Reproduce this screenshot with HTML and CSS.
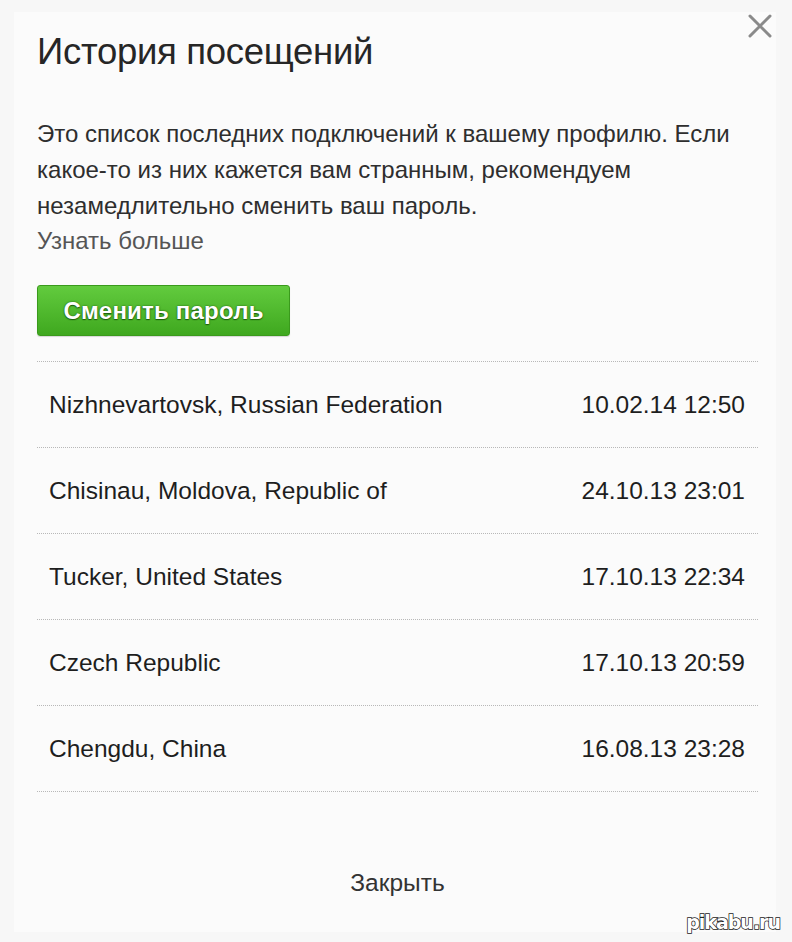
FILE: index.html
```html
<!DOCTYPE html>
<html lang="ru">
<head>
<meta charset="utf-8">
<link rel="stylesheet" href="styles.css">
</head>
<body>
<div class="dialog">
  <button class="close" aria-label="Закрыть">
    <svg width="24" height="24" viewBox="0 0 24 24"><path d="M2 2L22 22M22 2L2 22" stroke="#8a8a8a" stroke-width="3" stroke-linecap="round"/></svg>
  </button>
  <h1 class="title">История посещений</h1>
  <p class="intro">Это список последних подключений к вашему профилю. Если какое-то из них кажется вам странным, рекомендуем незамедлительно сменить ваш пароль.</p>
  <a class="more">Узнать больше</a>
  <div class="actions"><button class="btn-green">Сменить пароль</button></div>
  <ul class="visits">
    <li class="visit"><span class="place">Nizhnevartovsk, Russian Federation</span><span class="time">10.02.14 12:50</span></li>
    <li class="visit"><span class="place">Chisinau, Moldova, Republic of</span><span class="time">24.10.13 23:01</span></li>
    <li class="visit"><span class="place">Tucker, United States</span><span class="time">17.10.13 22:34</span></li>
    <li class="visit"><span class="place">Czech Republic</span><span class="time">17.10.13 20:59</span></li>
    <li class="visit"><span class="place">Chengdu, China</span><span class="time">16.08.13 23:28</span></li>
  </ul>
  <div class="footer"><a class="close-link">Закрыть</a></div>
</div>
<div class="watermark">pikabu.ru</div>
</body>
</html>
```
FILE: styles.css
```css
html, body {
  margin: 0;
  padding: 0;
}
body {
  background: #f7f7f7;
  font-family: "Liberation Sans", Arial, sans-serif;
  color: #222;
  width: 792px;
  height: 942px;
  position: relative;
  overflow: hidden;
}
.dialog {
  position: relative;
  margin: 12px 16px 0 14px;
  background: #fbfbfb;
  padding: 20px 18px 0 23px;
  height: 920px;
  box-sizing: border-box;
}
.close {
  position: absolute;
  top: 2px;
  right: 4px;
  width: 24px;
  height: 24px;
  padding: 0;
  border: 0;
  background: none;
}
.close svg { display: block; }
.title {
  margin: 0;
  font-weight: normal;
  font-size: 36.5px;
  line-height: 40px;
  color: #262626;
  letter-spacing: -0.3px;
}
.intro {
  margin: 44px 0 0;
  font-size: 24px;
  line-height: 36px;
  color: #2e2e2e;
}
.more {
  display: block;
  font-size: 24px;
  line-height: 34px;
  color: #555;
}
.actions {
  margin-top: 27px;
}
.btn-green {
  width: 253px;
  height: 51px;
  border: 1px solid #3a9a1c;
  border-radius: 3px;
  background: linear-gradient(#62cb3e, #3fa81f);
  color: #fff;
  font-family: "Liberation Sans", Arial, sans-serif;
  font-weight: bold;
  font-size: 24px;
  letter-spacing: 0.2px;
  text-shadow: 0 0 2px #1d5c0c, 0 1px 1px #1d5c0c;
  box-shadow: 0 1px 1px rgba(0,0,0,0.15);
  padding: 0;
}
.visits {
  list-style: none;
  margin: 25px 0 0;
  padding: 0;
  border-top: 1px dotted #b8b8b8;
}
.visit {
  display: flex;
  justify-content: space-between;
  align-items: center;
  height: 85px;
  padding: 0 13px 0 12px;
  border-bottom: 1px dotted #b8b8b8;
  font-size: 24.5px;
  color: #1e1e1e;
}
.footer {
  text-align: center;
  margin-top: 77px;
}
.close-link {
  font-size: 24.5px;
  color: #333;
}
.watermark {
  position: absolute;
  right: 12px;
  bottom: 9px;
  font-family: "DejaVu Sans", sans-serif;
  font-weight: bold;
  font-size: 19px;
  letter-spacing: -1px;
  color: #fff;
  -webkit-text-stroke: 1.5px #222;
  paint-order: stroke fill;
}
```
